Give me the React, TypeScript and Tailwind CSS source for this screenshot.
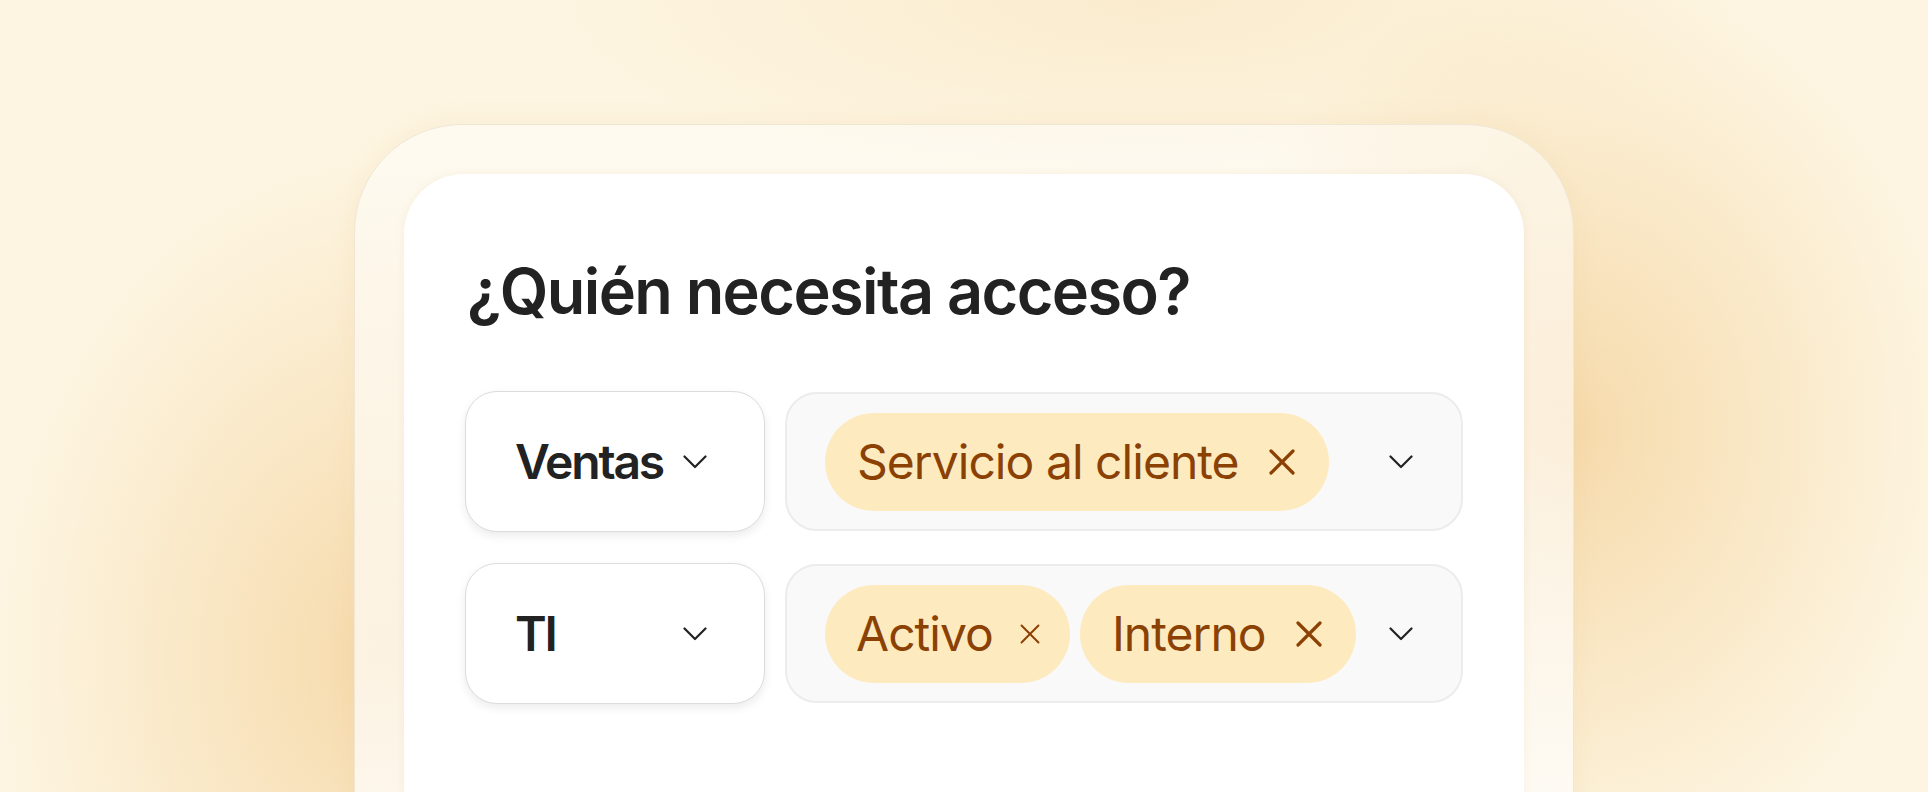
import React from "react";

function Chevron() {
  return (
    <svg width="24" height="14" viewBox="0 0 24 14" fill="none" className="shrink-0">
      <path d="M1.5 1.5 L12 12 L22.5 1.5" stroke="#222222" strokeWidth="2.2" strokeLinecap="round" strokeLinejoin="round" />
    </svg>
  );
}

function Cross({ size = 26, stroke = 3 }: { size?: number; stroke?: number }) {
  return (
    <svg width={size} height={size} viewBox="0 0 26 26" fill="none" className="shrink-0">
      <path d="M2 2 L24 24 M24 2 L2 24" stroke="#8a4103" strokeWidth={stroke} strokeLinecap="round" />
    </svg>
  );
}

interface Tag {
  label: string;
  small?: boolean;
}

interface Row {
  team: string;
  tags: Tag[];
}

const rows: Row[] = [
  { team: "Ventas", tags: [{ label: "Servicio al cliente" }] },
  { team: "TI", tags: [{ label: "Activo", small: true }, { label: "Interno" }] },
];

function TeamSelect({ team }: { team: string }) {
  return (
    <div className="w-[300px] h-[141px] shrink-0 flex items-center justify-between pl-[49px] pr-[57px] bg-white border border-[#dcdcdc] rounded-[32px] shadow-[0_4px_10px_rgba(0,0,0,0.08)]">
      <span className="text-[48px] leading-none font-semibold tracking-[-0.045em] text-[#222]">{team}</span>
      <Chevron />
    </div>
  );
}

function TagChip({ tag }: { tag: Tag }) {
  return (
    <div
      className={`h-[98px] flex items-center rounded-full bg-[#feeabf] ${
        tag.small ? "pl-[31px] pr-[30px] gap-[27px]" : "pl-[32px] pr-[34px] gap-[30px]"
      }`}
    >
      <span className="text-[48px] leading-none tracking-[-0.02em] text-[#8a4103]">{tag.label}</span>
      {tag.small ? <Cross size={20} stroke={2.6} /> : <Cross size={26} stroke={3.2} />}
    </div>
  );
}

export default function App() {
  return (
    <div className="w-[1928px] h-[792px] overflow-hidden font-['Inter',sans-serif] bg-[#fdf5e1] bg-[radial-gradient(380px_500px_at_380px_660px,#f6daab_0%,rgba(246,218,171,0)_100%),radial-gradient(380px_460px_at_1570px_430px,#f6daab_0%,rgba(246,218,171,0)_100%),radial-gradient(600px_180px_at_1150px_0px,#faebcd_0%,rgba(250,235,205,0)_100%)] flex justify-center pt-[124px]">
      <div className="w-[1220px] h-[800px] rounded-t-[108px] border border-[#efe6d4] bg-gradient-to-b from-white/45 to-white/75 pt-[49px] px-[49px] shadow-[0_0_24px_rgba(230,190,120,0.15)]">
        <div className="h-full rounded-t-[60px] bg-white px-[61px] pt-[86px] shadow-[0_0_10px_rgba(200,170,120,0.12)]">
          <h1 className="text-[63px] leading-none font-semibold tracking-[-0.025em] text-[#222] ml-[2px]">¿Quién necesita acceso?</h1>
          <div className="mt-[68px] flex flex-col gap-[31px]">
            {rows.map((row) => (
              <div key={row.team} className="flex items-center gap-[20px]">
                <TeamSelect team={row.team} />
                <div className="flex-1 h-[139px] flex items-center justify-between pl-[38px] pr-[48px] bg-[#f9f9f9] border-2 border-[#ececec] rounded-[32px]">
                  <div className="flex items-center gap-[10px]">
                    {row.tags.map((t) => (
                      <TagChip key={t.label} tag={t} />
                    ))}
                  </div>
                  <Chevron />
                </div>
              </div>
            ))}
          </div>
        </div>
      </div>
    </div>
  );
}
